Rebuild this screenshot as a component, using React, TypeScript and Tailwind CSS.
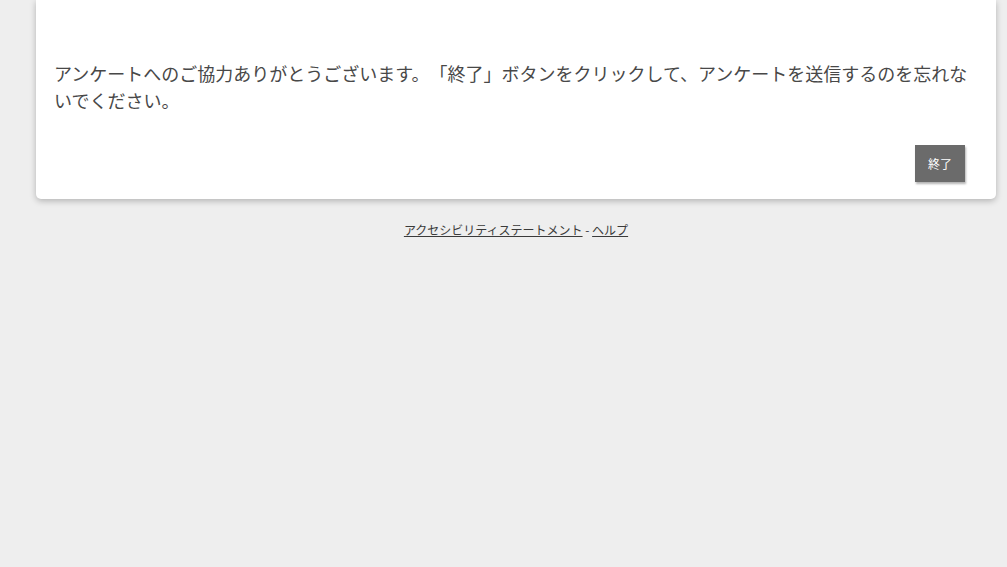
export default function App() {
  return (
    <div
      className="min-h-[567px] w-full bg-[#eeeeee] text-[#333] [text-spacing-trim:space-all]"
      style={{ fontFamily: '"Noto Sans CJK JP", "Noto Sans", sans-serif' }}
    >
      <main className="ml-[36px] w-[960px]">
        <section className="rounded-b-[5px] bg-white pl-[18px] pr-[22px] pb-[17px] pt-[60px] shadow-[0_2px_6px_rgba(0,0,0,0.25)]">
          <p className="text-[18px] leading-[27px] text-[#484848]">
            アンケートへのご協力ありがとうございます。「終了」ボタンをクリックして、アンケートを送信するのを忘れないでください。
          </p>
          <div className="mt-[31px] flex justify-end pr-[9px]">
            <button
              type="button"
              className="h-[37px] w-[50px] bg-[#6b6b6b] text-[12px] text-white shadow-[1px_2px_2px_rgba(0,0,0,0.3)]"
            >
              終了
            </button>
          </div>
        </section>
        <footer className="mt-[22px] text-center text-[12px] leading-[18px] text-[#3a3a3a]">
          <a href="#" className="underline">
            アクセシビリティステートメント
          </a>
          <span> - </span>
          <a href="#" className="underline">
            ヘルプ
          </a>
        </footer>
      </main>
    </div>
  );
}
